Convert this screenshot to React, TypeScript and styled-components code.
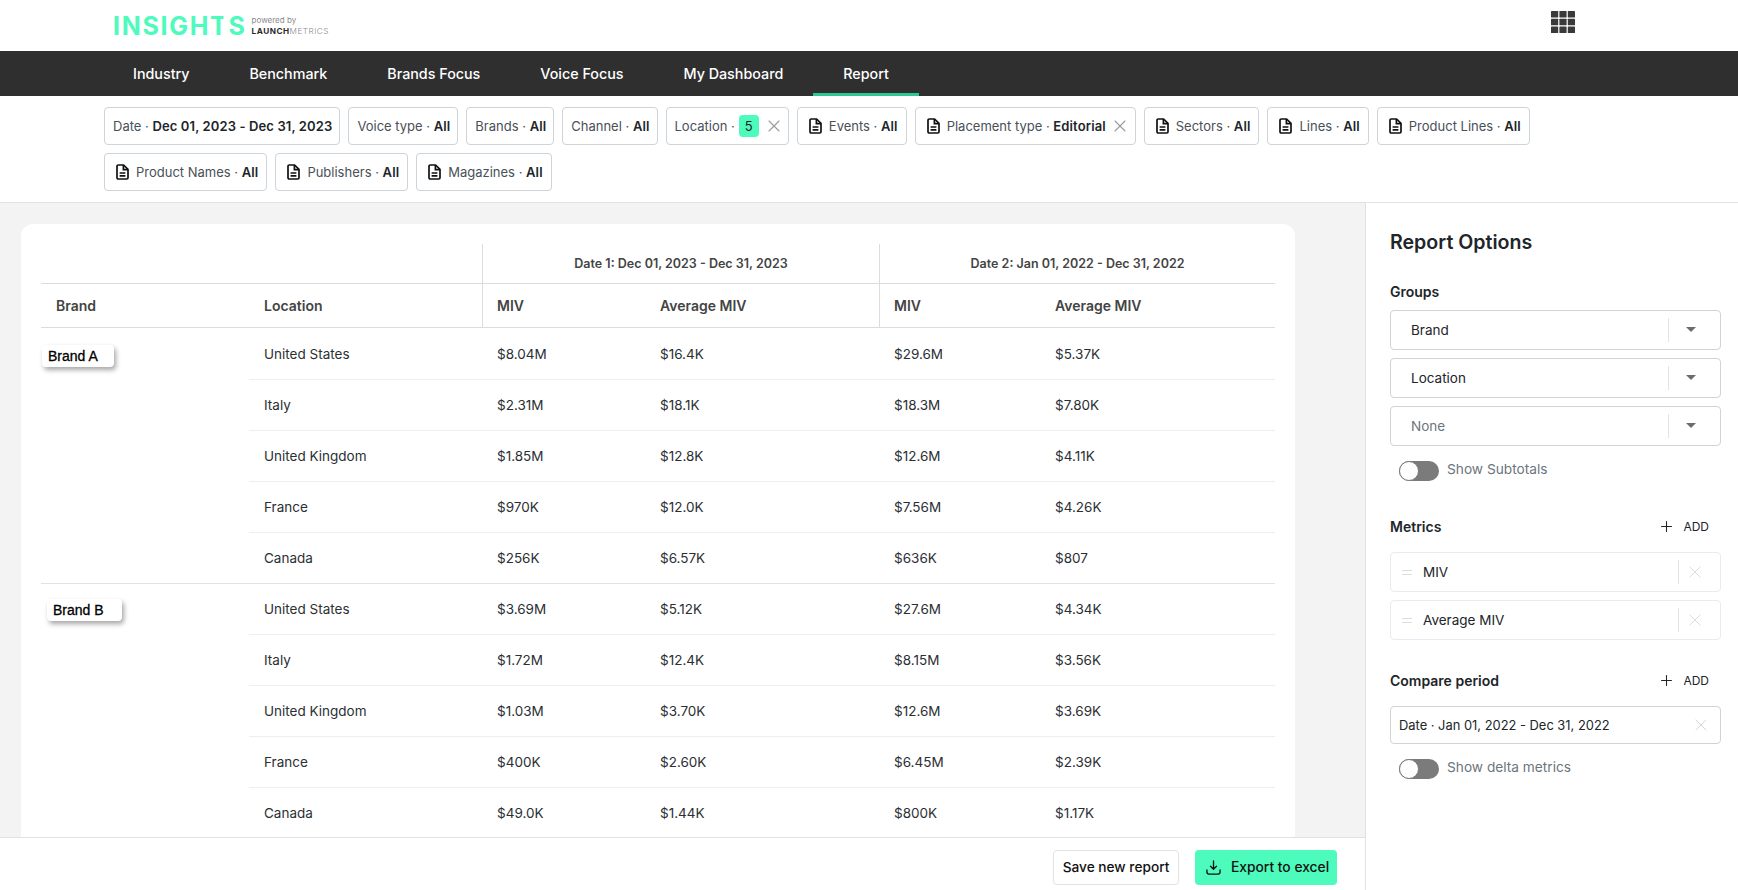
import React from 'react';
import styled, { createGlobalStyle } from 'styled-components';
import { Plus, X } from 'lucide-react';

const navItems = ['Industry', 'Benchmark', 'Brands Focus', 'Voice Focus', 'My Dashboard', 'Report'];

type FilterItem = { label: string; value?: string; doc?: boolean; badge?: string; clear?: boolean };

const filters: FilterItem[] = [
    { label: 'Date', value: 'Dec 01, 2023 - Dec 31, 2023' },
    { label: 'Voice type', value: 'All' },
    { label: 'Brands', value: 'All' },
    { label: 'Channel', value: 'All' },
    { label: 'Location', badge: '5', clear: true },
    { label: 'Events', value: 'All', doc: true },
    { label: 'Placement type', value: 'Editorial', doc: true, clear: true },
    { label: 'Sectors', value: 'All', doc: true },
    { label: 'Lines', value: 'All', doc: true },
    { label: 'Product Lines', value: 'All', doc: true },
    { label: 'Product Names', value: 'All', doc: true },
    { label: 'Publishers', value: 'All', doc: true },
    { label: 'Magazines', value: 'All', doc: true },
];

const brands = [
    {
        name: 'Brand A',
        offset: 1,
        top: 17,
        width: 72,
        rows: [
            ['United States', '$8.04M', '$16.4K', '$29.6M', '$5.37K'],
            ['Italy', '$2.31M', '$18.1K', '$18.3M', '$7.80K'],
            ['United Kingdom', '$1.85M', '$12.8K', '$12.6M', '$4.11K'],
            ['France', '$970K', '$12.0K', '$7.56M', '$4.26K'],
            ['Canada', '$256K', '$6.57K', '$636K', '$807'],
        ],
    },
    {
        name: 'Brand B',
        offset: 6,
        top: 15,
        width: 75,
        rows: [
            ['United States', '$3.69M', '$5.12K', '$27.6M', '$4.34K'],
            ['Italy', '$1.72M', '$12.4K', '$8.15M', '$3.56K'],
            ['United Kingdom', '$1.03M', '$3.70K', '$12.6M', '$3.69K'],
            ['France', '$400K', '$2.60K', '$6.45M', '$2.39K'],
            ['Canada', '$49.0K', '$1.44K', '$800K', '$1.17K'],
        ],
    },
];

const DocIcon = () => (
    <svg width="13" height="16" viewBox="0 0 13 16" fill="none" stroke="#111" strokeWidth="1.7">
        <path d="M1 2.2C1 1.5 1.5 1 2.2 1H7.6L12 5.4V13.8C12 14.5 11.5 15 10.8 15H2.2C1.5 15 1 14.5 1 13.8Z" strokeLinejoin="round" />
        <path d="M7.4 1V5.6H12" />
        <path d="M3.6 9H9.4M3.6 11.8H9.4" />
    </svg>
);

const AppsIcon = () => (
    <svg width="24" height="22" viewBox="0 0 24 22" fill="#3a3a3a">
        {[0, 8.4, 16.8].map((x) =>
            [0, 7.7, 15.4].map((y) => <rect key={`${x}-${y}`} x={x} y={y} width="7.2" height="6.6" rx="0.6" />)
        )}
    </svg>
);

const DownloadIcon = () => (
    <svg width="15" height="15" viewBox="0 0 16 16" fill="none" stroke="#111" strokeWidth="1.4" strokeLinecap="round" strokeLinejoin="round">
        <path d="M8 1V9.6M4.8 6.6L8 9.8L11.2 6.6" />
        <path d="M1 10.6V12.8C1 14 2 15 3.2 15H12.8C14 15 15 14 15 12.8V10.6" />
    </svg>
);

function Filter({ item }: { item: FilterItem }) {
    return (
        <Pill $doc={item.doc}>
            {item.doc && <DocIcon />}
            <span>
                {item.label} · {item.value && <b>{item.value}</b>}
            </span>
            {item.badge && <Badge>{item.badge}</Badge>}
            {item.clear && <ClearIcon size={20} strokeWidth={1.3} />}
        </Pill>
    );
}

function Select({ text, muted }: { text: string; muted?: boolean }) {
    return (
        <SelectBox>
            <SelectText $muted={muted}>{text}</SelectText>
            <SelectSide>
                <Caret />
            </SelectSide>
        </SelectBox>
    );
}

function Metric({ text }: { text: string }) {
    return (
        <MetricBox>
            <Grip />
            <MetricText>{text}</MetricText>
            <MetricSide>
                <X size={20} strokeWidth={1.2} color="#dcdcdc" />
            </MetricSide>
        </MetricBox>
    );
}

function ToggleRow({ text }: { text: string }) {
    return (
        <ToggleWrap>
            <Toggle>
                <Knob />
            </Toggle>
            <ToggleLabel>{text}</ToggleLabel>
        </ToggleWrap>
    );
}

function AddHead({ title }: { title: string }) {
    return (
        <SectionHead>
            <SectionTitle>{title}</SectionTitle>
            <AddButton>
                <Plus size={17} strokeWidth={1.5} />
                ADD
            </AddButton>
        </SectionHead>
    );
}

export default function App() {
    return (
        <Page>
            <GlobalStyle />
            <Header>
                <Logo>
                    <LogoWord>
                        INSIGH<LogoT>T</LogoT>S
                    </LogoWord>
                    <LogoSub>
                        <Powered>powered by</Powered>
                        <Launch>
                            <b>LAUNCH</b>METRICS
                        </Launch>
                    </LogoSub>
                </Logo>
                <AppsIcon />
            </Header>
            <Nav>
                {navItems.map((item) => (
                    <NavItem key={item} $active={item === 'Report'}>
                        {item}
                    </NavItem>
                ))}
            </Nav>
            <Filters>
                {filters.map((item) => (
                    <Filter key={item.label} item={item} />
                ))}
            </Filters>
            <Body>
                <Main>
                    <Scroll>
                        <Card>
                            <Table>
                                <colgroup>
                                    <col style={{ width: 208 }} />
                                    <col style={{ width: 234 }} />
                                    <col style={{ width: 163 }} />
                                    <col style={{ width: 234 }} />
                                    <col style={{ width: 161 }} />
                                    <col style={{ width: 234 }} />
                                </colgroup>
                                <thead>
                                    <tr>
                                        <GroupCell colSpan={2} $line />
                                        <GroupCell colSpan={2} $line>Date 1: Dec 01, 2023 - Dec 31, 2023</GroupCell>
                                        <GroupCell colSpan={2}>Date 2: Jan 01, 2022 - Dec 31, 2022</GroupCell>
                                    </tr>
                                    <tr>
                                        <HeadCell>Brand</HeadCell>
                                        <HeadCell $line>Location</HeadCell>
                                        <HeadCell>MIV</HeadCell>
                                        <HeadCell $line>Average MIV</HeadCell>
                                        <HeadCell>MIV</HeadCell>
                                        <HeadCell>Average MIV</HeadCell>
                                    </tr>
                                </thead>
                                {brands.map((brand) => (
                                    <BrandGroup key={brand.name}>
                                        {brand.rows.map((row, i) => (
                                            <tr key={row[0]}>
                                                {i === 0 && (
                                                    <BrandCell rowSpan={brand.rows.length} $top={brand.top}>
                                                        <BrandTag $offset={brand.offset} $width={brand.width}>
                                                            {brand.name}
                                                        </BrandTag>
                                                    </BrandCell>
                                                )}
                                                {row.map((cell, j) => (
                                                    <DataCell key={j}>{cell}</DataCell>
                                                ))}
                                            </tr>
                                        ))}
                                    </BrandGroup>
                                ))}
                            </Table>
                        </Card>
                    </Scroll>
                    <Footer>
                        <SaveButton>Save new report</SaveButton>
                        <ExportButton>
                            <DownloadIcon />
                            Export to excel
                        </ExportButton>
                    </Footer>
                </Main>
                <Sidebar>
                    <SideTitle>Report Options</SideTitle>
                    <GroupsLabel>Groups</GroupsLabel>
                    <Stack>
                        <Select text="Brand" />
                        <Select text="Location" />
                        <Select text="None" muted />
                    </Stack>
                    <ToggleRow text="Show Subtotals" />
                    <MetricsBlock>
                        <AddHead title="Metrics" />
                        <Stack>
                            <Metric text="MIV" />
                            <Metric text="Average MIV" />
                        </Stack>
                    </MetricsBlock>
                    <CompareBlock>
                        <AddHead title="Compare period" />
                        <DateInput>
                            Date · Jan 01, 2022 - Dec 31, 2022
                            <X size={20} strokeWidth={1.2} color="#d6d6d6" />
                        </DateInput>
                    </CompareBlock>
                    <ToggleRow text="Show delta metrics" />
                </Sidebar>
            </Body>
        </Page>
    );
}

const GlobalStyle = createGlobalStyle`
    html, body {
        margin: 0;
        padding: 0;
        height: 100%;
        overflow: hidden;
    }
    body {
        font-family: Inter, "Liberation Sans", sans-serif;
        color: #212529;
    }
    * {
        box-sizing: border-box;
    }
`;

const Page = styled.div`
    height: 890px;
    display: flex;
    flex-direction: column;
    background: #fff;
    overflow: hidden;
`;

const Header = styled.header`
    height: 51px;
    display: flex;
    align-items: center;
    justify-content: space-between;
    padding: 0 163px 7px 113px;
    flex-shrink: 0;
`;

const Logo = styled.div`
    display: flex;
    align-items: center;
    gap: 5px;
    padding-top: 7px;
`;

const LogoWord = styled.div`
    font-family: Inter, sans-serif;
    font-weight: 700;
    font-size: 25px;
    line-height: 26px;
    letter-spacing: 1.7px;
    color: #4dfbbd;
`;

const LogoT = styled.span`
    display: inline-block;
    clip-path: inset(0 5px 0 0);
`;

const LogoSub = styled.div`
    display: flex;
    flex-direction: column;
    gap: 1px;
    padding-top: 1px;
`;

const Powered = styled.span`
    font-size: 8px;
    line-height: 9px;
    color: #8a8a8a;
`;

const Launch = styled.span`
    font-size: 8.2px;
    line-height: 10px;
    letter-spacing: 0.5px;
    color: #8c8c8c;
    font-weight: 300;

    b {
        font-weight: 700;
        color: #2b2b2b;
    }
`;

const Nav = styled.nav`
    height: 45px;
    background: #2f2f2f;
    display: flex;
    padding-left: 103px;
    flex-shrink: 0;
`;

const NavItem = styled.a<{ $active?: boolean }>`
    height: 45px;
    padding: 0 30px 1px;
    display: flex;
    align-items: center;
    color: #fff;
    font-size: 14.3px;
    font-weight: 500;
    border-bottom: 3px solid ${(p) => (p.$active ? '#2fc795' : 'transparent')};
    border-top: 3px solid transparent;
`;

const Filters = styled.div`
    display: flex;
    flex-wrap: wrap;
    gap: 8px;
    padding: 11px 104px;
    height: 107px;
    align-content: flex-start;
    border-bottom: 1px solid #e2e2e2;
    flex-shrink: 0;
`;

const Pill = styled.div<{ $doc?: boolean }>`
    height: 38px;
    display: flex;
    align-items: center;
    gap: ${(p) => (p.$doc ? '7px' : '8px')};
    padding: 0 ${(p) => (p.$doc ? '8px' : '7px')} 0 ${(p) => (p.$doc ? '11px' : '8px')};
    border: 1px solid #ced4da;
    border-radius: 4px;
    font-size: 13px;
    color: #495057;
    white-space: nowrap;

    b {
        font-weight: 600;
        letter-spacing: 0.12px;
        color: #212529;
    }
`;

const Badge = styled.span`
    margin-left: -4px;
    width: 20px;
    height: 22px;
    display: flex;
    align-items: center;
    justify-content: center;
    background: #4dfbbd;
    border-radius: 4px;
    color: #212529;
`;

const ClearIcon = styled(X)`
    color: #9a9a9a;
    flex-shrink: 0;
    margin: 0 -3px 0 -3px;
`;

const Body = styled.div`
    flex: 1;
    min-height: 0;
    display: flex;
`;

const Main = styled.main`
    width: 1365px;
    display: flex;
    flex-direction: column;
    flex-shrink: 0;
`;

const Scroll = styled.div`
    flex: 1;
    min-height: 0;
    overflow: hidden;
    background: #f4f3f4;
    padding: 21px 70px 0 21px;
`;

const Card = styled.div`
    background: #fff;
    border-radius: 12px;
    padding: 20px;
    width: 1274px;
`;

const Table = styled.table`
    table-layout: fixed;
    width: 1234px;
    border-collapse: separate;
    border-spacing: 0;
    font-size: 13.5px;
`;

const GroupCell = styled.th<{ $line?: boolean }>`
    height: 40px;
    padding: 0;
    font-size: 12.5px;
    font-weight: 600;
    color: #444;
    text-align: center;
    border-bottom: 1px solid #dcdcdc;
    border-right: ${(p) => (p.$line ? '1px solid #dcdcdc' : 'none')};
`;

const HeadCell = styled.th<{ $line?: boolean }>`
    height: 44px;
    padding: 0 0 0 14px;
    font-size: 14px;
    font-weight: 600;
    color: #444;
    text-align: left;
    border-bottom: 1px solid #dcdcdc;
    border-right: ${(p) => (p.$line ? '1px solid #dcdcdc' : 'none')};

    &:nth-child(-n + 2) {
        padding-left: 15px;
    }
`;

const BrandGroup = styled.tbody`
    tr td {
        height: 51px;
        padding-bottom: 1px;
    }
    tr:first-child td {
        padding-bottom: 0;
    }
    &:nth-of-type(1) tr:first-child td {
        height: 52px;
    }
    tr:last-child td {
        border-bottom-color: #e2e2e2;
    }
`;

const BrandCell = styled.td<{ $top: number }>`
    padding: ${(p) => p.$top}px 0 0;
    vertical-align: top;
    border-bottom: 1px solid #e2e2e2;
`;

const BrandTag = styled.div<{ $offset: number; $width: number }>`
    display: inline-block;
    margin-left: ${(p) => p.$offset}px;
    width: ${(p) => p.$width}px;
    height: 22px;
    padding: 0 6px;
    background: #fff;
    border-radius: 4px;
    box-shadow: 2px 3px 5px rgba(0, 0, 0, 0.35);
    font-family: "Liberation Sans", sans-serif;
    font-size: 14px;
    font-weight: 500;
    line-height: 22px;
    color: #000;
    -webkit-text-stroke: 0.3px #000;
`;

const DataCell = styled.td`
    padding: 0 0 0 14px;
    color: #2b2f33;
    border-bottom: 1px solid #eee;

    &:nth-last-child(5) {
        padding-left: 15px;
    }
`;

const Footer = styled.footer`
    height: 53px;
    flex-shrink: 0;
    border-top: 1px solid #e2e2e2;
    display: flex;
    justify-content: flex-end;
    gap: 16px;
    padding: 12px 28px 0 0;
`;

const SaveButton = styled.button`
    width: 126px;
    height: 35px;
    padding: 0 0 2px;
    background: #fff;
    border: 1px solid #e2e2e2;
    border-radius: 4px;
    font-family: inherit;
    font-size: 13.7px;
    font-weight: 500;
    color: #111;
`;

const ExportButton = styled.button`
    width: 142px;
    height: 35px;
    display: flex;
    align-items: center;
    gap: 10px;
    padding: 0 0 1px 11px;
    background: #4dfbbd;
    border: none;
    border-radius: 4px;
    font-family: inherit;
    font-size: 13.8px;
    font-weight: 500;
    color: #111;
`;

const Sidebar = styled.aside`
    flex: 1;
    border-left: 1px solid #e2e2e2;
    padding: 27px 17px 0 24px;
`;

const SideTitle = styled.h2`
    margin: 0;
    font-size: 19.6px;
    line-height: 24px;
    font-weight: 600;
    color: #212529;
`;

const GroupsLabel = styled.div`
    margin: 28px 0 8px;
    font-size: 14px;
    line-height: 20px;
    font-weight: 600;
`;

const Stack = styled.div`
    display: flex;
    flex-direction: column;
    gap: 8px;
`;

const SelectBox = styled.div`
    height: 40px;
    display: flex;
    align-items: center;
    border: 1px solid #ced4da;
    border-radius: 4px;
    padding-left: 20px;
`;

const SelectText = styled.span<{ $muted?: boolean }>`
    flex: 1;
    font-size: 13.5px;
    padding-bottom: 1px;
    color: ${(p) => (p.$muted ? '#6c757d' : '#212529')};
`;

const SelectSide = styled.div`
    width: 52px;
    height: 24px;
    border-left: 1px solid #e2e2e2;
    display: flex;
    align-items: center;
    padding-left: 17px;
`;

const Caret = styled.span`
    width: 0;
    height: 0;
    border-left: 5px solid transparent;
    border-right: 5px solid transparent;
    border-top: 5px solid #6c6c6c;
    margin-top: -2px;
`;

const ToggleWrap = styled.div`
    display: flex;
    align-items: center;
    gap: 8px;
    margin: 15px 0 0 9px;
`;

const Toggle = styled.div`
    width: 40px;
    height: 20px;
    border-radius: 10px;
    background: #7b7b7b;
    display: flex;
    align-items: center;
`;

const Knob = styled.span`
    width: 20px;
    height: 20px;
    border-radius: 50%;
    background: #fff;
    border: 1px solid #7b7b7b;
`;

const ToggleLabel = styled.span`
    font-size: 13.7px;
    padding-bottom: 4px;
    color: #6c757d;
`;

const MetricsBlock = styled.section`
    margin-top: 33px;
`;

const CompareBlock = styled.section`
    margin-top: 28px;
`;

const SectionHead = styled.div`
    height: 24px;
    display: flex;
    align-items: center;
    justify-content: space-between;
    padding-right: 12px;
    margin-bottom: 14px;
`;

const SectionTitle = styled.div`
    font-size: 14px;
    font-weight: 600;
`;

const AddButton = styled.div`
    display: flex;
    align-items: center;
    gap: 8px;
    font-size: 12px;
    font-weight: 400;
    color: #212529;
`;

const MetricBox = styled.div`
    height: 40px;
    display: flex;
    align-items: center;
    border: 1px solid #e9ecef;
    border-radius: 4px;
    padding-left: 11px;
`;

const Grip = styled.span`
    width: 10px;
    height: 5px;
    border-top: 1px solid #ddd;
    border-bottom: 1px solid #ddd;
    margin-right: 11px;
`;

const MetricText = styled.span`
    flex: 1;
    font-size: 13.5px;
    padding-bottom: 1px;
`;

const MetricSide = styled.div`
    width: 42px;
    height: 24px;
    border-left: 1px solid #e2e2e2;
    display: flex;
    align-items: center;
    padding-left: 6px;
`;

const DateInput = styled.div`
    height: 38px;
    display: flex;
    align-items: center;
    justify-content: space-between;
    padding: 0 9px 0 8px;
    border: 1px solid #ced4da;
    border-radius: 4px;
    font-size: 12.9px;
    color: #212529;
`;
